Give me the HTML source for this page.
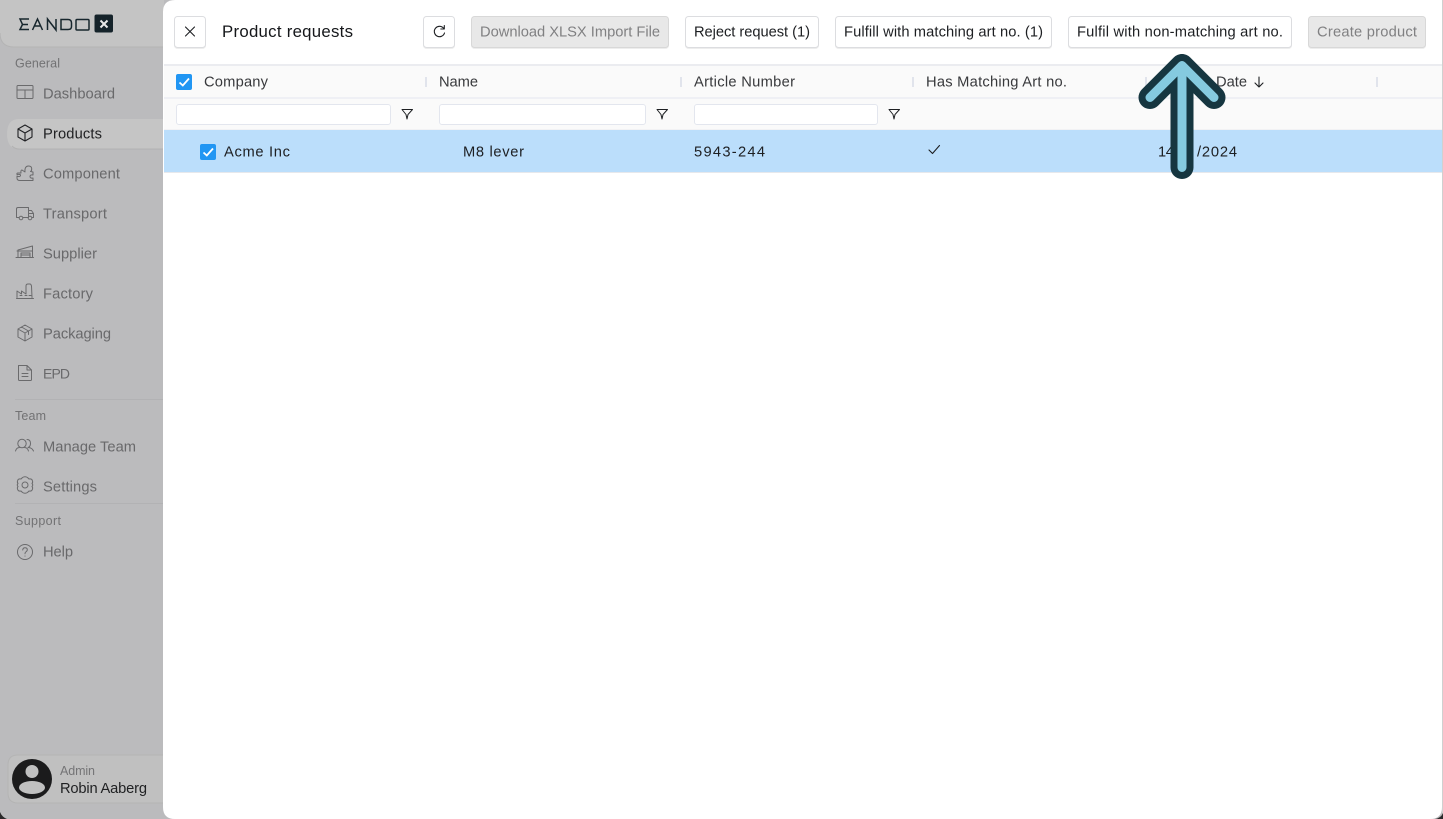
<!DOCTYPE html>
<html><head><meta charset="utf-8"><title>Product requests</title>
<style>
html,body{margin:0;padding:0;width:1443px;height:819px;overflow:hidden;background:#bbbbbd}
svg{display:block}
text{font-family:"Liberation Sans",sans-serif;font-size:14.7px;fill:#1d1f22}
.n{fill:#69696b}
.s{font-size:12.5px;fill:#727274}
.i{fill:none;stroke:#6a6a6c;stroke-width:1;stroke-linecap:round;stroke-linejoin:round}
.d{fill:none;stroke:#1d1f22;stroke-width:1.1;stroke-linecap:round;stroke-linejoin:round}
.b{fill:#fff;stroke:#dcdde0;stroke-width:1;filter:drop-shadow(0 1px 0 rgba(0,0,0,.07))}
.g{fill:#e8e8e8;stroke:#d8d8d8;stroke-width:1;filter:drop-shadow(0 1px 0 rgba(0,0,0,.07))}
.f{fill:#fff;stroke:#e3e6ee;stroke-width:1}
.dis{fill:#808082}
.sep{fill:#e1e4ec}
</style></head><body>
<svg width="1443" height="819" viewBox="0 0 1443 819" xmlns="http://www.w3.org/2000/svg">
<rect width="1443" height="819" fill="#bbbbbd"/>
<!-- window corners -->
<path d="M0 812V819H7Q2 817 0 812Z" fill="#2a2a2a"/>
<!-- logo header -->
<path d="M0 0H164V47H14Q0 47 0 33Z" fill="#c4c4c4"/>
<path d="M0 33Q0 47 14 47H164" fill="none" stroke="#b4b4b4"/>
<g fill="none" stroke="#17262d" stroke-width="1.5">
<path d="M29 19H20L22.500 24.500L20 29.500H29M23 24.500H28"/>
<path d="M32.500 30L37.500 19L42.500 30M34.500 26H40.500"/>
<path d="M47.500 30V19L56 30V19"/>
<path d="M61 19.500H68Q71.500 19.500 71.500 23V26.500Q71.500 29.500 68 29.500H61Z"/>
<rect x="76" y="19.500" width="13" height="10.500" rx="1"/>
</g>
<rect x="94.500" y="14.500" width="18.500" height="18" rx="2" fill="#15232a"/>
<path d="M100.500 20.500L107.500 27.500M107.500 20.500L100.500 27.500" stroke="#e8e8e8" stroke-width="2" fill="none"/>
<!-- section labels -->
<text class="s" x="15" y="67.500" textLength="45">General</text>
<text class="s" x="15" y="420" textLength="31">Team</text>
<text class="s" x="15" y="525" textLength="46">Support</text>
<rect x="15" y="399" width="149" height="1" fill="#b2b2b4"/>
<rect x="15" y="503" width="149" height="1" fill="#b2b2b4"/>
<!-- active pill -->
<path d="M19 119H164V149H19Q7 149 7 134T19 119Z" fill="#c5c5c5"/>
<path d="M12 146Q15 149 19 149H164" fill="none" stroke="#b2b2b2"/>
<!-- nav -->
<text class="n" x="43" y="98.500" textLength="72">Dashboard</text>
<text x="43" y="138.500" textLength="59" style="fill:#1f2022">Products</text>
<text class="n" x="43" y="178.500" textLength="77">Component</text>
<text class="n" x="43" y="218.500" textLength="64">Transport</text>
<text class="n" x="43" y="258.500" textLength="54">Supplier</text>
<text class="n" x="43" y="298.500" textLength="50">Factory</text>
<text class="n" x="43" y="338.500" textLength="68">Packaging</text>
<text class="n" x="43" y="378.500" textLength="27" style="font-size:14px">EPD</text>
<text class="n" x="43" y="451.500" textLength="93">Manage Team</text>
<text class="n" x="43" y="491.500" textLength="54">Settings</text>
<text class="n" x="43" y="556.500" textLength="30">Help</text>
<!-- icons -->
<g class="i">
<rect x="17" y="85.500" width="16" height="13" rx="1"/><path d="M17 90H33M25 90V98.500"/>
<path d="M16.500 217V209Q16.500 207.500 18 207.500H28.500V217.500H23M19 217.500H16.500M28.500 210.500H31.500L33.500 213.500V217.500H32M28.500 217.500H28M28.500 213.500H33.500"/><circle cx="21" cy="218" r="1.800"/><circle cx="30" cy="218" r="1.800"/>
<path d="M16 257.500H33.500M17 251H32M18 257V250L32.500 246V257M21 257V253H30V257M21 255H30"/>
<path d="M16.500 298.500H33.500M17 297.500V291L21.500 294V291L26 294V286Q26 284 28 284H30Q31 284 31.500 286L32 297.500M20 295.500H22M25 295.500H27M29 295.500H31"/>
<path d="M25 325L32 329V337L25 341L18 337V329ZM18 329L25 333L32 329M25 333V341M21.500 327L28.500 331V334.500"/>
<path d="M18.500 365.500H27L31.500 370V379.500Q31.500 380.500 30.500 380.500H19.500Q18.500 380.500 18.500 379.500ZM27 365.500V370H31.500M22 373.500H28M22 376.500H28"/>
<circle cx="22" cy="443.500" r="4.200"/><path d="M15.500 451Q16.500 447.500 19.500 447.500M24.500 447.500Q27.500 447.500 28.500 451M27 439.500Q30.500 439.500 30.500 443.500Q30.500 446.500 28 447.500Q32 447.500 33.500 451"/>
<circle cx="25" cy="485" r="3"/><path d="M22.500 477.500Q25 476 27.500 477.500L29 479Q32 478.500 32.500 481Q33 482.500 32 483.500Q33.500 485 32 486.500Q33 487.500 32.500 489Q32 491.500 29 491L27.500 492.500Q25 494 22.500 492.500L21 491Q18 491.500 17.500 489Q17 487.500 18 486.500Q16.500 485 18 483.500Q17 482.500 17.500 481Q18 478.500 21 479Z"/>
<circle cx="25" cy="552" r="7.500"/><path d="M22.700 550Q23 547.800 25 547.800Q27.300 547.800 27.300 549.800Q27.300 551 25.800 552Q25 552.500 25 553.700M25 556V556.100"/>
<path d="M21 173Q20.500 170 22 170L25 172Q24.500 166 28.500 166Q32.500 166 31.500 170.500L30.500 171.500L33 172V175Q30 174.500 30 176.500Q30 178.500 33 178V180.500H20Q17 180.500 17 178V176Q20 177.500 20.500 175.500Q21 174 17 174.500Q16.500 173 18 173Z"/>
</g>
<path class="d" d="M25 125L32 129V137L25 141L18 137V129ZM18 129L25 133L32 129M25 133V141" style="stroke:#202124"/>
<!-- user card -->
<path d="M18 755H164V803H18Q8 803 8 793V765Q8 755 18 755Z" fill="#c0c0c0" stroke="#b4b4b4"/>
<circle cx="32" cy="779" r="20" fill="#1b1b1c"/>
<circle cx="32" cy="771.500" r="6.500" fill="#c0c0c0"/>
<ellipse cx="32" cy="787.500" rx="13" ry="6.500" fill="#c0c0c0"/>
<text x="60" y="775" textLength="35" style="font-size:12.500px;fill:#747476">Admin</text>
<text x="60" y="793" textLength="87" style="fill:#1f2022">Robin Aaberg</text>
<!-- main panel -->
<path d="M175 0H1442V807Q1442 819 1430 819H175Q163 819 163 807V12Q163 0 175 0Z" fill="#fff"/>
<rect x="1442" y="0" width="1" height="819" fill="#d0d0d0"/>
<path d="M1443 813V819H1435Q1441 818 1443 813Z" fill="#2a2a2a"/>
<!-- toolbar -->
<rect class="b" x="174.500" y="16.500" width="31" height="31" rx="3"/>
<path class="d" d="M185.500 27L194.500 36M194.500 27L185.500 36"/>
<text x="222" y="37" textLength="131" style="font-size:16.800px;fill:#15171a">Product requests</text>
<rect class="b" x="423.500" y="16.500" width="31" height="31" rx="3"/>
<path class="d" d="M443.800 28.500A5.200 5.200 0 1 0 444.500 33M444.300 25.500V29H440.800"/>
<rect class="g" x="471.500" y="16.500" width="197" height="31" rx="3"/>
<text class="dis" x="480" y="36.500" textLength="180">Download XLSX Import File</text>
<rect class="b" x="685.500" y="16.500" width="133" height="31" rx="3"/>
<text x="694" y="36.500" textLength="116">Reject request (1)</text>
<rect class="b" x="835.500" y="16.500" width="216" height="31" rx="3"/>
<text x="844" y="36.500" textLength="199">Fulfill with matching art no. (1)</text>
<rect class="b" x="1068.500" y="16.500" width="223" height="31" rx="3"/>
<text x="1077" y="36.500" textLength="206">Fulfil with non-matching art no.</text>
<rect class="g" x="1308.500" y="16.500" width="117" height="31" rx="3"/>
<text class="dis" x="1317" y="36.500" textLength="100">Create product</text>
<!-- table header -->
<rect x="164" y="64" width="1278" height="67" fill="#fafafa"/>
<rect x="164" y="64" width="1278" height="2" fill="#ebecf0"/>
<rect x="164" y="97" width="1278" height="2" fill="#eff0f5"/>
<rect x="164" y="129.500" width="1278" height="1" fill="#e9eaee"/>
<rect class="sep" x="425" y="77" width="2" height="10"/>
<rect class="sep" x="680" y="77" width="2" height="10"/>
<rect class="sep" x="912" y="77" width="2" height="10"/>
<rect class="sep" x="1145" y="77" width="2" height="10"/>
<rect class="sep" x="1376" y="77" width="2" height="10"/>
<rect x="176" y="74" width="16" height="16" rx="2" fill="#2196f3"/>
<path d="M179.500 82.500L182.800 85.500L189 78.500" fill="none" stroke="#fff" stroke-width="1.800"/>
<text x="204" y="86.500" textLength="64" style="fill:#38393c">Company</text>
<text x="439" y="86.500" textLength="39" style="fill:#38393c">Name</text>
<text x="694" y="86.500" textLength="101" style="fill:#38393c">Article Number</text>
<text x="926" y="86.500" textLength="141" style="fill:#38393c">Has Matching Art no.</text>
<text x="1216" y="86.500" textLength="31" style="fill:#38393c">Date</text>
<path class="d" d="M1259 77V87M1255 83L1259 87L1263 83"/>
<!-- filters -->
<rect class="f" x="176.500" y="104.500" width="214" height="20" rx="2.500"/>
<rect class="f" x="439.500" y="104.500" width="206" height="20" rx="2.500"/>
<rect class="f" x="694.500" y="104.500" width="183" height="20" rx="2.500"/>
<g class="d" style="stroke-width:1">
<path d="M402 109.500H412.500L408 114.500L407 119L406 114.500Z"/>
<path d="M657 109.500H667.500L663 114.500L662 119L661 114.500Z"/>
<path d="M889 109.500H899.500L895 114.500L894 119L893 114.500Z"/>
</g>
<!-- row -->
<rect x="164" y="130" width="1278" height="42" fill="#bbdefb"/>
<rect x="164" y="172" width="1278" height="1" fill="#e6e8ec"/>
<rect x="200" y="144" width="16" height="16" rx="2" fill="#2196f3"/>
<path d="M203.500 152.500L206.800 155.500L213 148.500" fill="none" stroke="#fff" stroke-width="1.800"/>
<text x="224" y="156.500" textLength="66">Acme Inc</text>
<text x="463" y="156.500" textLength="61">M8 lever</text>
<text x="694" y="156.500" textLength="71">5943-244</text>
<path class="d" d="M929 150L932.500 153.500L939.500 145.500"/>
<text x="1158" y="156.500" textLength="34">14/11</text>
<text x="1197" y="156.500" textLength="40">/2024</text>
<!-- arrow -->
<g fill="none" stroke-linecap="round" stroke-linejoin="round">
<path d="M1182 167.500V65.500M1150 97.500L1182 65.500L1214 97.500" stroke="#163640" stroke-width="23"/>
<path d="M1182 167.500V65.500M1150 97.500L1182 65.500L1214 97.500" stroke="#85cadf" stroke-width="9"/>
</g>
</svg>
</body></html>
